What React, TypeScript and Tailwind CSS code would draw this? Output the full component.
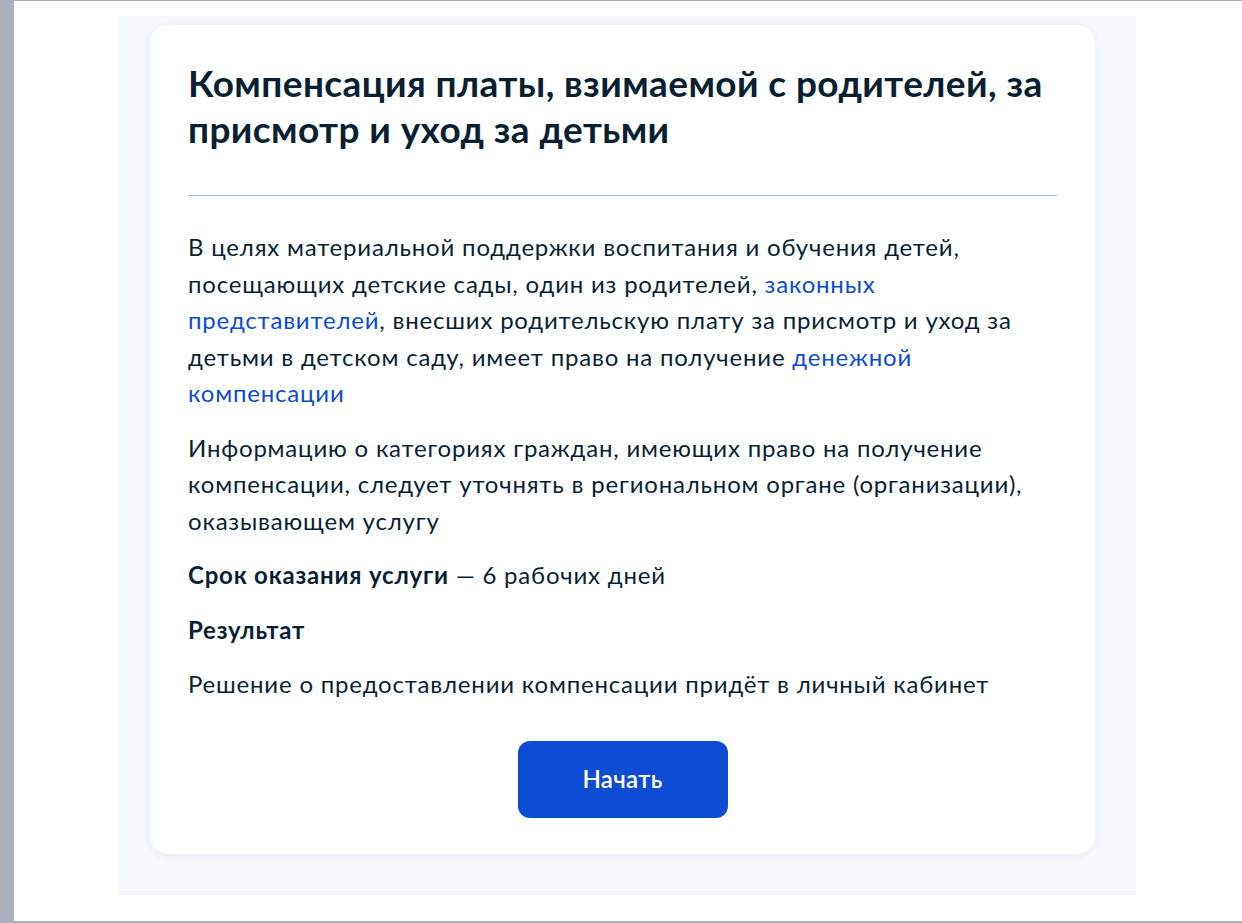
export default function App() {
    return (
        <div className="flex h-[923px] w-[1242px] bg-white font-['Lato','Noto_Sans',sans-serif] text-[#0b1f33]">
            <div className="w-[14px] shrink-0 bg-[#a9b0bb]" />
            <main className="flex flex-1 border-t border-b-2 border-[#a9b0bb] pt-[15px] pb-[26px] pl-[104px]">
                <div className="flex h-[879px] w-[1018px] items-start bg-[#f6f8fd] pt-[9px] pr-[41px] pb-[41px] pl-[32px]">
                    <section className="flex h-[829px] w-[945px] flex-col rounded-[18px] bg-white px-[38px] pt-[35px] pb-[36px] shadow-[0_2px_6px_rgba(60,80,140,0.07)]">
                        <h1 className="text-[37px] leading-[46px] font-bold tracking-[0.4px]">
                            Компенсация платы, взимаемой с родителей, за
                            <br />
                            присмотр и уход за детьми
                        </h1>
                        <div className="mt-[43px] h-px bg-[#a9bcf5]" />

                        <div className="mt-[33px] flex flex-col gap-[18px] text-[24px] leading-[36.5px] tracking-[0.8px]">
                            <p>
                                В целях материальной поддержки воспитания и обучения детей,
                                <br />
                                посещающих детские сады, один из родителей,{' '}
                                <a className="text-[#0d4cd3]">законных</a>
                                <br />
                                <a className="text-[#0d4cd3]">представителей</a>, внесших родительскую плату за присмотр и уход за
                                <br />
                                детьми в детском саду, имеет право на получение{' '}
                                <a className="text-[#0d4cd3]">денежной</a>
                                <br />
                                <a className="text-[#0d4cd3]">компенсации</a>
                            </p>
                            <p>
                                Информацию о категориях граждан, имеющих право на получение
                                <br />
                                компенсации, следует уточнять в региональном органе (организации),
                                <br />
                                оказывающем услугу
                            </p>
                            <p>
                                <b className="font-bold">Срок оказания услуги</b> — 6 рабочих дней
                            </p>
                            <p className="font-bold">Результат</p>
                            <p>Решение о предоставлении компенсации придёт в личный кабинет</p>
                        </div>

                        <div className="mt-[38px] flex justify-center">
                            <button className="h-[77px] w-[210px] rounded-[12px] bg-[#0d4cd3] text-[24px] font-semibold tracking-[0.3px] text-white">
                                Начать
                            </button>
                        </div>
                    </section>
                </div>
            </main>
        </div>
    )
}
